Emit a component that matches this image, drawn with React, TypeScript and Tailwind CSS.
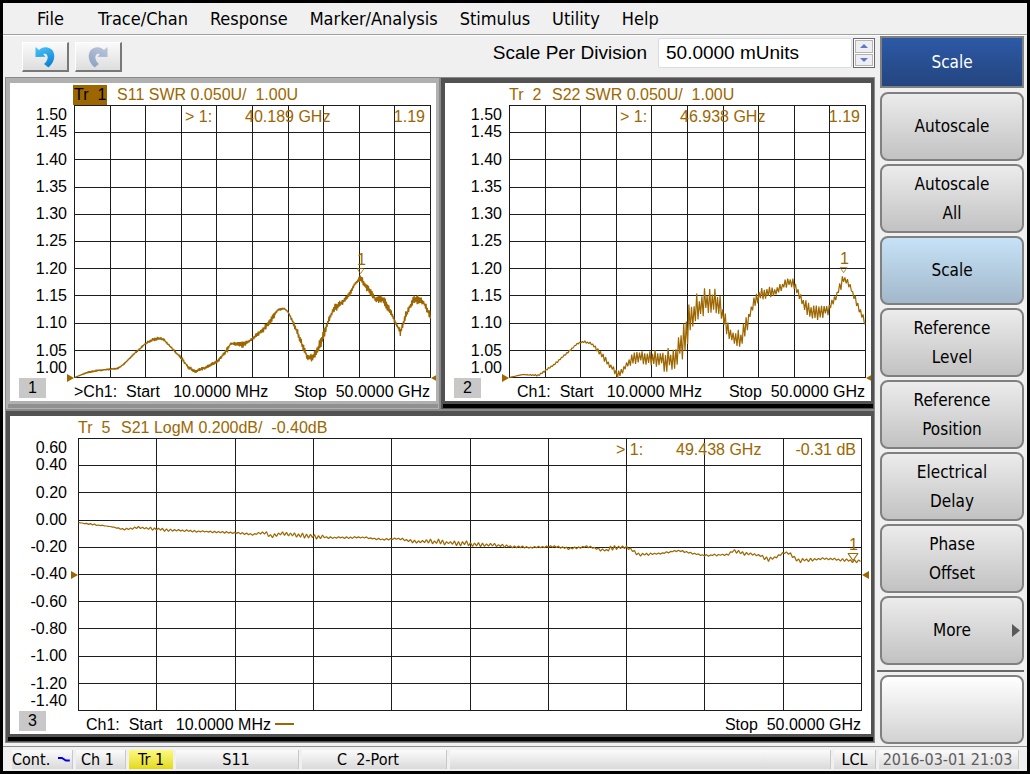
import React from 'react';

type Point = [x: number, y: number, noise: number];

interface Chart {
  id: number;
  trace: string;
  title: string;
  active?: boolean;
  wide?: boolean;
  width: number;
  step: number;
  labels: string[];
  marker: { freq: string; value: string; x: number; y: number };
  refLine: number;
  start: string;
  points: Point[];
}

const PLOT_HEIGHT = 273;

const swrLabels = ['1.50', '1.45', '1.40', '1.35', '1.30', '1.25', '1.20', '1.15', '1.10', '1.05', '1.00'];

const s11: Chart = {
  id: 1,
  trace: 'Tr  1',
  title: 'S11 SWR 0.050U/  1.00U',
  active: true,
  width: 357,
  step: 0.6,
  labels: swrLabels,
  marker: { freq: '40.189 GHz', value: '1.19', x: 286, y: 169 },
  refLine: 10,
  start: '>Ch1:  Start   10.0000 MHz',
  points: [
    [0, 272, 0], [13, 267, 1], [23, 265, 1], [43, 263, 1], [49, 259, 1], [59, 249, 1], [71, 238, 1], [78, 234, 2],
    [84, 233, 2], [89, 234, 2], [94, 239, 1], [108, 254, 2], [114, 262, 2], [121, 266, 2], [133, 261, 2],
    [143, 256, 2], [153, 244, 3], [156, 238, 1], [168, 239, 4], [174, 236, 2], [188, 225, 3], [196, 215, 4],
    [204, 204, 2], [210, 203, 1], [214, 207, 1], [221, 222, 4], [228, 240, 4], [233, 252, 3], [238, 252, 5],
    [241, 248, 4], [248, 233, 7], [254, 215, 3], [259, 204, 6], [268, 197, 3], [274, 190, 3], [281, 178, 2],
    [286, 172, 4], [293, 183, 5], [301, 194, 3], [309, 194, 5], [314, 203, 5], [321, 217, 2], [326, 227, 4],
    [331, 210, 4], [338, 196, 4], [342, 193, 6], [349, 197, 3], [356, 211, 6],
  ],
};

const s22: Chart = {
  id: 2,
  trace: 'Tr  2',
  title: 'S22 SWR 0.050U/  1.00U',
  width: 357,
  step: 1.3,
  labels: swrLabels,
  marker: { freq: '46.938 GHz', value: '1.19', x: 334, y: 168 },
  refLine: 10,
  start: 'Ch1:  Start   10.0000 MHz',
  points: [
    [0, 272, 0], [13, 269, 0], [29, 270, 1], [36, 265, 1], [46, 258, 1], [58, 247, 1], [68, 238, 1], [75, 236, 1],
    [83, 239, 2], [91, 248, 3], [103, 263, 4], [108, 270, 4], [116, 262, 4], [123, 253, 6], [143, 252, 8],
    [151, 254, 9], [158, 256, 13], [166, 250, 15], [173, 235, 19], [179, 218, 21], [188, 205, 19], [201, 193, 15],
    [208, 197, 15], [213, 208, 11], [218, 223, 10], [226, 235, 11], [233, 232, 11], [239, 212, 10], [246, 193, 7],
    [258, 186, 7], [268, 186, 5], [276, 178, 5], [283, 175, 7], [289, 188, 4], [298, 205, 9], [308, 208, 9],
    [319, 204, 7], [328, 188, 4], [334, 173, 6], [339, 177, 4], [349, 202, 4], [356, 218, 6],
  ],
};

const s21: Chart = {
  id: 3,
  trace: 'Tr  5',
  title: 'S21 LogM 0.200dB/  -0.40dB',
  wide: true,
  width: 784,
  step: 2,
  labels: ['0.60', '0.40', '0.20', '0.00', '-0.20', '-0.40', '-0.60', '-0.80', '-1.00', '-1.20', '-1.40'],
  marker: { freq: '49.438 GHz', value: '-0.31 dB', x: 774, y: 123 },
  refLine: 5,
  start: 'Ch1:  Start   10.0000 MHz',
  points: [
    [0, 84, 0], [14, 86, 1], [32, 88, 0], [45, 91, 1], [60, 89, 1], [82, 91, 2], [122, 93, 1], [152, 94, 1],
    [175, 96, 1], [187, 94, 2], [192, 98, 2], [205, 95, 2], [234, 98, 3], [255, 99, 1], [285, 99, 1], [302, 101, 1],
    [319, 100, 1], [335, 103, 2], [352, 103, 3], [385, 105, 3], [419, 107, 2], [452, 109, 1], [475, 108, 1],
    [492, 110, 2], [509, 108, 1], [527, 112, 2], [535, 109, 3], [549, 109, 2], [560, 116, 2], [582, 115, 1],
    [599, 112, 1], [625, 117, 1], [650, 116, 1], [654, 112, 2], [665, 115, 2], [682, 117, 2], [690, 121, 3],
    [697, 119, 2], [705, 114, 1], [712, 115, 2], [719, 122, 3], [747, 120, 1], [782, 123, 2],
  ],
};

const menuItems = ['File', 'Trace/Chan', 'Response', 'Marker/Analysis', 'Stimulus', 'Utility', 'Help'];

const softkeys = [
  { lines: ['Autoscale'] },
  { lines: ['Autoscale', 'All'] },
  { lines: ['Scale'], selected: true },
  { lines: ['Reference', 'Level'] },
  { lines: ['Reference', 'Position'] },
  { lines: ['Electrical', 'Delay'] },
  { lines: ['Phase', 'Offset'] },
  { lines: ['More'], more: true },
];

// Samples swing above and below the smooth curve; step is the sample spacing
const tracePath = (points: Point[], step: number) => {
  const out: string[] = [];
  const end = points[points.length - 1];
  let seg = 0;
  for (let n = 0; n * step < end[0]; n++) {
    const x = n * step;
    while (x >= points[seg + 1][0]) seg++;
    const [x0, y0, n0] = points[seg];
    const [x1, y1, n1] = points[seg + 1];
    const t = (x - x0) / (x1 - x0);
    const rand = Math.abs(Math.sin(n * 12.9898) * 43758.5453) % 1;
    const swing = (n % 2 ? 1 : -1) * (0.3 + rand * 0.7) * (n0 + (n1 - n0) * t);
    out.push(`${(x + 0.5).toFixed(1)},${(y0 + (y1 - y0) * t + swing + 0.5).toFixed(1)}`);
  }
  out.push(`${end[0] + 0.5},${end[1] + 0.5}`);
  return out.join(' ');
};

const RefArrow = ({ side }: { side: 'left' | 'right' }) => (
  <svg viewBox="0 0 7 8" className="w-[7px] h-2 fill-[#9c6600]">
    <path d={side === 'left' ? 'M0 0 L7 4 L0 8 Z' : 'M7 0 L0 4 L7 8 Z'} />
  </svg>
);

const Plot = ({ chart }: { chart: Chart }) => {
  const { width, marker } = chart;
  const ticks = Array.from({ length: 11 }, (_, i) => i);
  const refTop = `${((chart.refLine * 27.2 + 0.5) / PLOT_HEIGHT) * 100}%`;

  return (
    <div className="relative flex-1 min-w-0 text-[#9c6600]">
      <svg
        viewBox={`0 0 ${width} ${PLOT_HEIGHT}`}
        preserveAspectRatio="none"
        className="absolute inset-0 w-full h-full"
      >
        {ticks.map((i) => {
          const x = Math.round((i * (width - 1)) / 10) + 0.5;
          const y = Math.round(i * 27.2) + 0.5;
          return (
            <g key={i} stroke="#1c1c1c" shapeRendering="crispEdges">
              <line x1={x} x2={x} y1={0} y2={PLOT_HEIGHT} />
              <line x1={0} x2={width} y1={y} y2={y} />
            </g>
          );
        })}
        <polyline
          points={tracePath(chart.points, chart.step)}
          fill="none"
          stroke="#9c6600"
          strokeWidth={1.2}
          strokeLinejoin="bevel"
        />
      </svg>

      <div className="absolute top-0.5 right-1.5 w-60 flex leading-5 whitespace-pre">
        <span className="w-[60px]">&gt; 1:</span>
        <span className="flex-1">{marker.freq}</span>
        <span>{marker.value}</span>
      </div>

      <div
        className="absolute flex flex-col items-center -translate-x-1/2 -translate-y-full"
        style={{ left: `${((marker.x + 0.5) / width) * 100}%`, top: `${(marker.y / PLOT_HEIGHT) * 100}%` }}
      >
        <span className="pl-0.5 leading-4">1</span>
        <svg
          viewBox="0 0 10 8"
          preserveAspectRatio="none"
          className={chart.wide ? 'w-[11px] h-2' : 'w-2 h-1.5'}
          fill="none"
          stroke="#9c6600"
        >
          <path d="M0.5 0.5 H9.5 L5 7.5 Z" />
        </svg>
      </div>

      <div className="absolute right-full -translate-y-1/2" style={{ top: refTop }}>
        <RefArrow side="left" />
      </div>
      <div className="absolute left-full -translate-y-1/2" style={{ top: refTop }}>
        <RefArrow side="right" />
      </div>
    </div>
  );
};

const ChartPanel = ({ chart }: { chart: Chart }) => {
  const frame = chart.active ? 'bg-[#b0b0b0] border-[#8a8a8a]' : 'bg-[#525252] border-[#8a8a8a]';
  const band = chart.active ? 'bg-[#909090]' : 'bg-black';
  const last = chart.labels.length - 1;

  return (
    <section className={`flex-1 min-w-0 flex flex-col border pt-[5px] pl-1 pr-[3px] pb-px ${frame}`}>
      <div
        className={`flex-1 flex flex-col bg-white overflow-hidden text-base ${chart.wide ? 'pr-[9px]' : 'pr-[5px]'}`}
      >
        <h2
          className={`flex h-[22px] pt-px items-center leading-5 whitespace-pre text-[#9c6600] ${
            chart.wide ? 'ml-[67px]' : 'ml-[63px]'
          }`}
        >
          <span className="w-11 flex">
            <span className={chart.active ? 'bg-[#9c6600] text-black px-px' : 'px-px'}>{chart.trace}</span>
          </span>
          {chart.title}
        </h2>

        <div className="flex-1 min-h-[240px] flex">
          <div className={`w-[57px] flex flex-col text-right leading-5 ${chart.wide ? 'mr-[11px]' : 'mr-[7px]'}`}>
            {chart.labels.map((label, i) => (
              <div
                key={label}
                className={`min-h-0 basis-0 flex justify-end ${
                  i === 0 ? 'grow items-start' : i === last ? 'grow items-end' : 'grow-2 items-center'
                }`}
              >
                {label}
              </div>
            ))}
          </div>
          <Plot chart={chart} />
        </div>

        <div className="flex h-[23px] whitespace-pre text-black">
          <span className="ml-[9px] w-[27px] h-5 leading-5 text-center bg-[#c8c8c8]">{chart.id}</span>
          <span
            className={`leading-7 ${chart.active ? 'ml-[28px]' : chart.wide ? 'ml-[40px]' : 'ml-[36px]'}`}
          >
            {chart.start}
          </span>
          {chart.wide && <span className="ml-1 mt-3 w-[19px] h-0.5 bg-[#9c6600]" />}
          <span className="ml-auto pr-px leading-7">{'Stop  50.0000 GHz'}</span>
        </div>
      </div>
      <div className={`mt-[3px] mx-[-2px] h-1 ${band}`} />
    </section>
  );
};

const UndoIcon = ({ id, from, to, flip }: { id: string; from: string; to: string; flip?: boolean }) => (
  <svg viewBox="0 0 20 22" className={`w-5 h-[22px] ${flip ? '-scale-x-100' : ''}`}>
    <defs>
      <linearGradient id={id} x1="0" y1="0" x2="0.4" y2="1">
        <stop offset="0" stopColor={from} />
        <stop offset="1" stopColor={to} />
      </linearGradient>
    </defs>
    <path
      d="M0.5 1 L4 4 C7 0.5 14 -0.5 18 5 C21 11 18.5 17 13.5 21.5 L9 18 C12.5 15 13.5 11.5 12 9 C11 7.6 9.8 7.6 8.2 8.2 L10.5 10.7 L0.5 11 Z"
      fill={`url(#${id})`}
    />
  </svg>
);

const toolButton =
  'w-[47px] h-[30px] flex items-center justify-center bg-linear-to-b from-[#fafafa] to-[#dedede] border-t border-l border-t-white border-l-white border-r-2 border-b-2 border-r-[#787878] border-b-[#787878]';

const Toolbar = () => (
  <div className="flex items-start pt-[2px] pl-[19px] pr-[2px] h-[41px]">
    <div className="flex gap-1.5 pt-1">
      <button aria-label="Undo" className={toolButton}>
        <UndoIcon id="undo" from="#4cc4fa" to="#0f86d4" />
      </button>
      <button aria-label="Redo" className={toolButton} disabled>
        <UndoIcon id="redo" from="#bcc6dc" to="#92a6c4" flip />
      </button>
    </div>
    <label htmlFor="scale" className="ml-auto mr-[11px] text-[19px] leading-[30px]">
      Scale Per Division
    </label>
    <input
      id="scale"
      defaultValue="50.0000 mUnits"
      className="w-[194px] h-[30px] pl-[7px] text-[19px] bg-white border border-[#d8dce4] rounded-xs outline-none"
    />
    <div className="ml-px w-[22px] h-[30px] flex flex-col gap-px p-px border border-[#696969] bg-white">
      <button aria-label="Increase" className="flex-1 flex items-center justify-center border border-[#b4b4b4] bg-[#eeeef2]">
        <svg viewBox="0 0 8 4" className="w-2 h-1 fill-[#5c78c8]">
          <path d="M0 4 L4 0 L8 4 Z" />
        </svg>
      </button>
      <button aria-label="Decrease" className="flex-1 flex items-center justify-center border border-[#b4b4b4] bg-[#eeeef2]">
        <svg viewBox="0 0 8 4" className="w-2 h-1 fill-[#5c78c8]">
          <path d="M0 0 L4 4 L8 0 Z" />
        </svg>
      </button>
    </div>
  </div>
);

const Sidebar = () => (
  <aside className="w-[150px] flex flex-col pl-[3px] pr-[3px] text-[17px] leading-[29px]">
    <h1 className="h-[52px] mb-1 flex items-center justify-center text-white bg-linear-to-b from-[#2c59a6] to-[#24457f] border-2 border-[#808080]">
      Scale
    </h1>
    <div className="flex flex-col gap-[3px]">
      {softkeys.map((key) => (
        <button
          key={key.lines.join(' ')}
          className={`relative h-[69px] flex flex-col items-center justify-center rounded-lg border-2 border-[#808080] bg-linear-to-b ${
            key.selected ? 'from-[#c6e2f6] to-[#a2b8ca]' : 'from-[#ececec] to-[#c2c2c2]'
          }`}
        >
          {key.lines.map((line) => (
            <span key={line}>{line}</span>
          ))}
          {key.more && (
            <svg viewBox="0 0 8 13" className="absolute right-0.5 w-2 h-[13px] fill-[#5a5a5a]">
              <path d="M0 0 L8 6.5 L0 13 Z" />
            </svg>
          )}
        </button>
      ))}
    </div>
    <div className="mt-[5px] mb-[3px] -ml-[3px] h-0.5 bg-[#696969]" />
    <button
      aria-label="Unassigned"
      className="h-[69px] rounded-lg border-2 border-[#808080] bg-linear-to-b from-white to-[#d2d2d2]"
    />
  </aside>
);

const cell = 'h-[19px] flex items-center justify-center bg-linear-to-b from-[#fbfbfb] to-[#dadada] border-r border-[#c8c8c8] whitespace-pre';

const StatusBar = () => (
  <footer className="flex gap-[3px] h-[25px] pt-[3px] pl-[9px] pr-[8px] border-t border-[#8c8c8c] text-base">
    <div className={`${cell} w-[61px] gap-2 pr-0.5`}>
      Cont.
      <svg viewBox="0 0 12 5" className="w-3 h-[5px]" fill="none" stroke="#0000f0" strokeWidth={2}>
        <path d="M0 1 H4 L8 3.5 H12" />
      </svg>
    </div>
    <div className={`${cell} w-[50px] pr-1.5`}>Ch 1</div>
    <div className="h-[19px] w-[44px] flex items-center justify-center bg-linear-to-b from-[#fdf97a] to-[#e2da00]">
      Tr 1
    </div>
    <div className={`${cell} w-[123px] pr-0.5`}>S11</div>
    <div className={`${cell} w-[145px] pr-3`}>{'C  2-Port'}</div>
    <div className={`${cell} flex-1`} />
    <div className={`${cell} w-[42px]`}>LCL</div>
    <div className={`${cell} w-[140px] pr-0.5 text-[#5c5c5c]`}>2016-03-01 21:03</div>
  </footer>
);

const App: React.FC = () => {
  return (
    <div className="min-h-screen flex flex-col border-[3px] border-black bg-[#f0f0f0] text-black font-['DejaVu_Sans_Condensed','Noto_Sans',sans-serif]">
      <nav className="flex h-8 items-center gap-[22px] pl-[34px] border-b border-[#a0a0a0] text-lg">
        {menuItems.map((item) => (
          <button key={item} className="first:mr-3">
            {item}
          </button>
        ))}
      </nav>

      <div className="flex-1 flex border-t border-white">
        <main className="flex-1 min-w-0 flex flex-col font-['Liberation_Sans',Arial,sans-serif]">
          <Toolbar />
          <div className="flex-1 flex flex-col pl-[2px] pr-[2px] pb-[3px]">
            <div className="flex-1 flex">
              <ChartPanel chart={s11} />
              <ChartPanel chart={s22} />
            </div>
            <div className="flex-1 flex">
              <ChartPanel chart={s21} />
            </div>
          </div>
        </main>
        <Sidebar />
      </div>

      <StatusBar />
    </div>
  );
};

export default App;
